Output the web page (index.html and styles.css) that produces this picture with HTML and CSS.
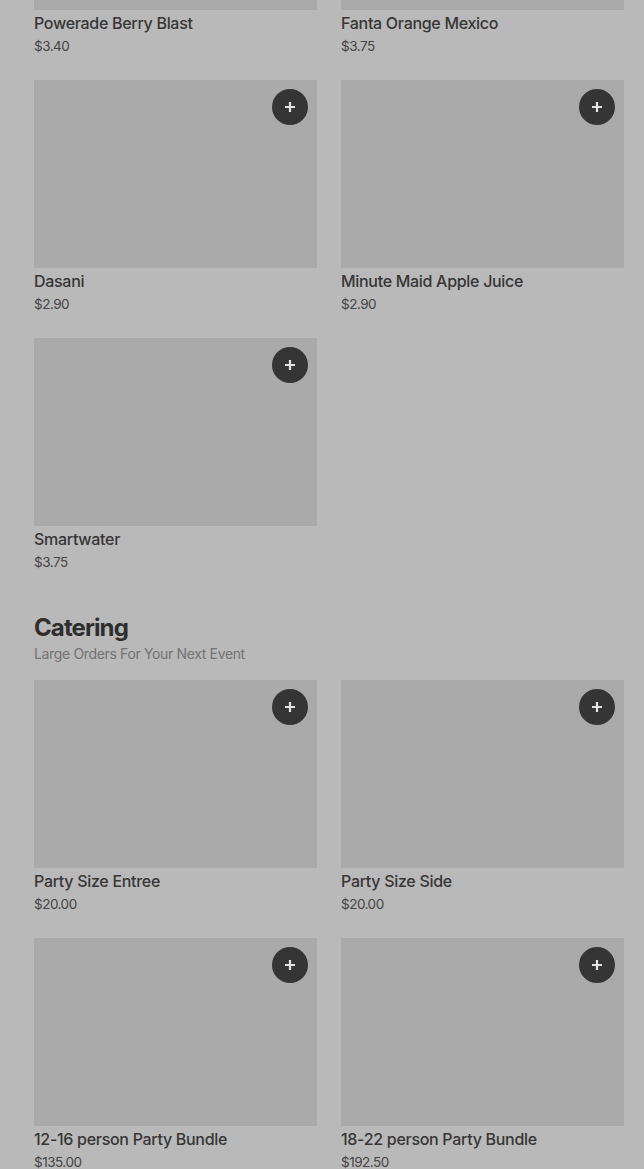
FILE: index.html
```html
<!DOCTYPE html>
<html>
<head>
<meta charset="utf-8">
<link rel="stylesheet" href="styles.css">
</head>
<body>
<main class="page">
  <section class="grid first">
    <div class="card">
      <div class="thumb"><span class="add"><svg viewBox="0 0 12 12" width="12" height="12"><path d="M6 1v10M1 6h10" stroke="#e4e4e4" stroke-width="2.2" fill="none"/></svg></span></div>
      <div class="info"><div class="name">Powerade Berry Blast</div><div class="price">$3.40</div></div>
    </div>
    <div class="card">
      <div class="thumb"><span class="add"><svg viewBox="0 0 12 12" width="12" height="12"><path d="M6 1v10M1 6h10" stroke="#e4e4e4" stroke-width="2.2" fill="none"/></svg></span></div>
      <div class="info"><div class="name">Fanta Orange Mexico</div><div class="price">$3.75</div></div>
    </div>
    <div class="card">
      <div class="thumb"><span class="add"><svg viewBox="0 0 12 12" width="12" height="12"><path d="M6 1v10M1 6h10" stroke="#e4e4e4" stroke-width="2.2" fill="none"/></svg></span></div>
      <div class="info"><div class="name">Dasani</div><div class="price">$2.90</div></div>
    </div>
    <div class="card">
      <div class="thumb"><span class="add"><svg viewBox="0 0 12 12" width="12" height="12"><path d="M6 1v10M1 6h10" stroke="#e4e4e4" stroke-width="2.2" fill="none"/></svg></span></div>
      <div class="info"><div class="name">Minute Maid Apple Juice</div><div class="price">$2.90</div></div>
    </div>
    <div class="card">
      <div class="thumb"><span class="add"><svg viewBox="0 0 12 12" width="12" height="12"><path d="M6 1v10M1 6h10" stroke="#e4e4e4" stroke-width="2.2" fill="none"/></svg></span></div>
      <div class="info"><div class="name">Smartwater</div><div class="price">$3.75</div></div>
    </div>
  </section>

  <section class="category">
    <h2 class="cat-title">Catering</h2>
    <p class="cat-sub">Large Orders For Your Next Event</p>
    <div class="grid">
      <div class="card">
        <div class="thumb"><span class="add"><svg viewBox="0 0 12 12" width="12" height="12"><path d="M6 1v10M1 6h10" stroke="#e4e4e4" stroke-width="2.2" fill="none"/></svg></span></div>
        <div class="info"><div class="name">Party Size Entree</div><div class="price">$20.00</div></div>
      </div>
      <div class="card">
        <div class="thumb"><span class="add"><svg viewBox="0 0 12 12" width="12" height="12"><path d="M6 1v10M1 6h10" stroke="#e4e4e4" stroke-width="2.2" fill="none"/></svg></span></div>
        <div class="info"><div class="name">Party Size Side</div><div class="price">$20.00</div></div>
      </div>
      <div class="card">
        <div class="thumb"><span class="add"><svg viewBox="0 0 12 12" width="12" height="12"><path d="M6 1v10M1 6h10" stroke="#e4e4e4" stroke-width="2.2" fill="none"/></svg></span></div>
        <div class="info"><div class="name">12-16 person Party Bundle</div><div class="price">$135.00</div></div>
      </div>
      <div class="card">
        <div class="thumb"><span class="add"><svg viewBox="0 0 12 12" width="12" height="12"><path d="M6 1v10M1 6h10" stroke="#e4e4e4" stroke-width="2.2" fill="none"/></svg></span></div>
        <div class="info"><div class="name">18-22 person Party Bundle</div><div class="price">$192.50</div></div>
      </div>
    </div>
  </section>
</main>
</body>
</html>
```

FILE: styles.css
```css
html, body {
  margin: 0;
  padding: 0;
  background: #b9b9b9;
  height: 1169px;
  overflow: hidden;
}
body {
  font-family: Inter, "Liberation Sans", sans-serif;
  color: #333333;
}
.page {
  padding: 0 20px 0 34px;
  margin-top: -178px;
}
.grid {
  display: grid;
  grid-template-columns: 283px 283px;
  column-gap: 24px;
  row-gap: 24px;
}
.card {
  display: flex;
  flex-direction: column;
  height: 234px;
}
.thumb {
  position: relative;
  height: 188px;
  background: #aaaaaa;
}
.add {
  position: absolute;
  top: 9px;
  right: 9px;
  width: 36px;
  height: 36px;
  border-radius: 50%;
  background: #353535;
  display: flex;
  align-items: center;
  justify-content: center;
}
.info {
  padding-top: 3px;
}
.name {
  font-size: 16px;
  line-height: 20px;
  font-weight: 500;
  letter-spacing: -0.3px;
  color: #363636;
}
.price {
  margin-top: 3px;
  font-size: 13.5px;
  line-height: 20px;
  color: #444444;
  letter-spacing: -0.5px;
}
.category {
  margin-top: 40px;
}
.cat-title {
  margin: 0;
  font-size: 24px;
  line-height: 32px;
  font-weight: 700;
  letter-spacing: -0.9px;
  color: #2e2e2e;
}
.cat-sub {
  margin: 0 0 16px;
  font-size: 14px;
  line-height: 20px;
  letter-spacing: -0.35px;
  color: #737373;
}
```
